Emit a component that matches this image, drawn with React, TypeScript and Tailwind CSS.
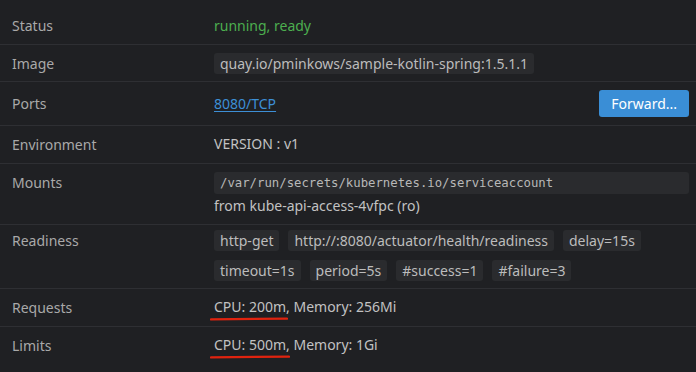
import type { ReactNode } from "react";

function Row({ label, children, className = "py-2" }: { label: string; children: ReactNode; className?: string }) {
  return (
    <div className={`grid grid-cols-[202px_1fr] pl-3 pr-[7px] border-b border-[#2e2f33] ${className}`}>
      <div className="text-[#a9a9a9] leading-5 pt-px">{label}</div>
      <div className="min-w-0">{children}</div>
    </div>
  );
}

function Chip({ children }: { children: ReactNode }) {
  return (
    <span className="inline-flex items-center h-[21px] px-[6px] rounded-[3px] bg-[#2a2b2e] text-[#bcbcbc]">
      {children}
    </span>
  );
}

function Marked({ children, width }: { children: ReactNode; width: number }) {
  return (
    <span className="relative">
      {children}
      <svg
        className="absolute left-[-4px] top-[19px] pointer-events-none"
        width={width}
        height="6"
        viewBox={`0 0 ${width} 6`}
      >
        <path
          d={`M1 3.4 C ${width * 0.3} 3.1, ${width * 0.6} 2.7, ${width - 1} 2.6`}
          stroke="#e0230f"
          strokeWidth="2.2"
          strokeLinecap="round"
          fill="none"
        />
      </svg>
    </span>
  );
}

export default function App() {
  const probes = [
    "http-get",
    "http://:8080/actuator/health/readiness",
    "delay=15s",
    "timeout=1s",
    "period=5s",
    "#success=1",
    "#failure=3",
  ];

  return (
    <div className="w-[696px] h-[372px] overflow-hidden bg-[#1f2023] text-[14px] text-[#c2c2c2] pt-[7px] font-['Noto_Sans',sans-serif]">
      <Row label="Status">
        <span className="leading-5 text-[#4cae4f]">running, ready</span>
      </Row>
      <Row label="Image" className="pt-[8px] pb-[7px]">
        <Chip>quay.io/pminkows/sample-kotlin-spring:1.5.1.1</Chip>
      </Row>
      <Row label="Ports" className="py-2 items-center">
        <div className="flex items-center justify-between">
          <a href="#" className="text-[#3d8fd6] underline underline-offset-2 leading-5">
            8080/TCP
          </a>
          <button className="h-[27px] px-[12px] rounded-[3px] bg-[#3a8ed6] text-white leading-5">
            Forward...
          </button>
        </div>
      </Row>
      <Row label="Environment">
        <div className="leading-5">VERSION : v1</div>
      </Row>
      <Row label="Mounts" className="pt-[8px] pb-[8px]">
        <div className="flex items-center h-[22px] px-[6px] rounded-[3px] bg-[#2a2b2e] text-[#b8b8b8] text-[12.3px] font-['DejaVu_Sans_Mono',monospace]">
          /var/run/secrets/kubernetes.io/serviceaccount
        </div>
        <div className="leading-5 mt-[2px]">from kube-api-access-4vfpc (ro)</div>
      </Row>
      <Row label="Readiness" className="pt-[5px] pb-[7px]">
        <div className="flex flex-wrap gap-x-[9px] gap-y-[9px]">
          {probes.map((p) => (
            <Chip key={p}>{p}</Chip>
          ))}
        </div>
      </Row>
      <Row label="Requests">
        <div className="leading-5">
          <Marked width={78}>CPU: 200m,</Marked> Memory: 256Mi
        </div>
      </Row>
      <Row label="Limits" className="py-2 border-b-0">
        <div className="leading-5">
          <Marked width={80}>CPU: 500m,</Marked> Memory: 1Gi
        </div>
      </Row>
    </div>
  );
}
